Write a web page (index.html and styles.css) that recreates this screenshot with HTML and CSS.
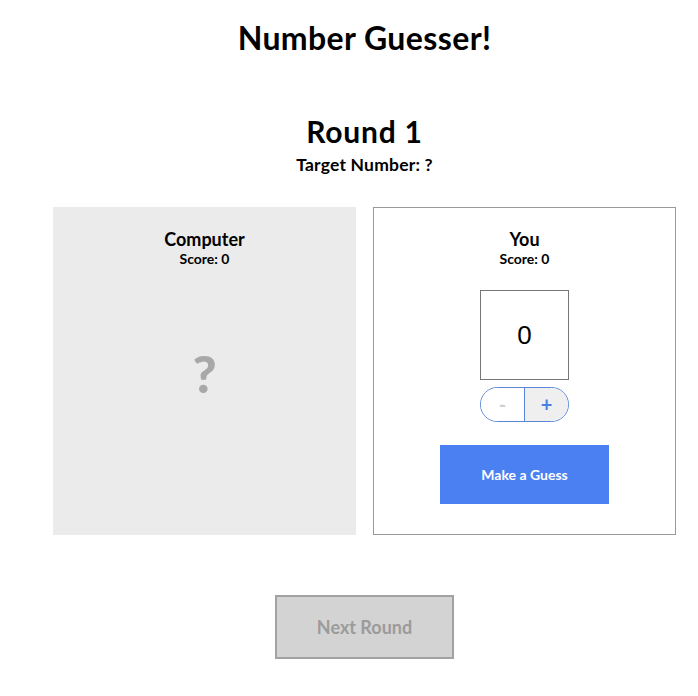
FILE: index.html
```html
<!DOCTYPE html>
<html>
<head>
<meta charset="utf-8">
<link rel="stylesheet" href="styles.css">
</head>
<body>
<div class="page">
  <h1 class="title">Number Guesser!</h1>
  <div class="round">
    <h2 class="round-title">Round 1</h2>
    <div class="target">Target Number: ?</div>
  </div>
  <div class="cards">
    <div class="card card-computer">
      <div class="card-name">Computer</div>
      <div class="card-score">Score: 0</div>
      <div class="mystery">?</div>
    </div>
    <div class="card card-you">
      <div class="card-name">You</div>
      <div class="card-score">Score: 0</div>
      <div class="guess-box">0</div>
      <div class="stepper">
        <button class="step step-minus">-</button>
        <button class="step step-plus">+</button>
      </div>
      <button class="guess-btn">Make a Guess</button>
    </div>
  </div>
  <div class="next-wrap">
    <button class="next-btn">Next Round</button>
  </div>
</div>
</body>
</html>
```
FILE: styles.css
```css
* { box-sizing: border-box; }
body {
  margin: 0;
  font-family: Lato, "Noto Sans", sans-serif;
  color: #000;
  background: #fff;
}
.page {
  width: 623px;
  margin-left: 53px;
  display: flex;
  flex-direction: column;
  align-items: center;
}
.title {
  margin: 19px 0 0;
  font-size: 32px;
  line-height: 38px;
  font-weight: 700;
  letter-spacing: 0.4px;
}
.round {
  margin-top: 56px;
  display: flex;
  flex-direction: column;
  align-items: center;
}
.round-title {
  margin: 0;
  font-size: 30px;
  line-height: 36px;
  font-weight: 700;
  letter-spacing: 0.8px;
}
.target {
  margin-top: 5px;
  font-size: 17.5px;
  line-height: 21px;
  font-weight: 700;
  letter-spacing: 0.2px;
}
.cards {
  margin-top: 32px;
  width: 100%;
  display: grid;
  grid-template-columns: 303px 303px;
  gap: 17px;
}
.card {
  height: 328px;
  display: flex;
  flex-direction: column;
  align-items: center;
  padding-top: 21px;
}
.card-computer { background: #ebebeb; }
.card-you { border: 1px solid #999; padding-top: 20px; }
.card-name {
  font-size: 18px;
  line-height: 22px;
  font-weight: 700;
}
.card-score {
  font-size: 14px;
  line-height: 16px;
  font-weight: 700;
  margin-top: 1px;
}
.mystery {
  margin-top: 76px;
  font-size: 52px;
  line-height: 60px;
  font-weight: 900;
  color: #a8a8a8;
}
.guess-box {
  margin-top: 23px;
  width: 89px;
  height: 90px;
  border: 1px solid #767676;
  display: flex;
  align-items: center;
  justify-content: center;
  font-family: "Liberation Sans", Arial, sans-serif;
  font-size: 26px;
}
.stepper {
  margin-top: 7px;
  width: 89px;
  height: 35px;
  display: flex;
  border: 1px solid #5a86d8;
  border-radius: 18px;
  overflow: hidden;
}
.step {
  flex: 1;
  border: 0;
  margin: 0;
  padding: 0;
  font-family: Lato, "Noto Sans", sans-serif;
  font-size: 20px;
  font-weight: 700;
  line-height: 33px;
}
.step-minus { background: #fff; color: #d0d0d0; border-right: 1px solid #5a86d8; }
.step-plus { background: #efefef; color: #4a7fe6; }
.guess-btn {
  margin-top: 23px;
  width: 169px;
  height: 59px;
  border: 0;
  background: #4b80f3;
  color: #fff;
  font-family: Lato, "Noto Sans", sans-serif;
  font-size: 14px;
  font-weight: 700;
}
.next-wrap {
  margin-top: 60px;
  width: 100%;
  display: flex;
  justify-content: center;
}
.next-btn {
  width: 179px;
  height: 64px;
  background: #d3d3d3;
  border: 2px solid #a2a2a2;
  color: #9b9b9b;
  font-family: Lato, "Noto Sans", sans-serif;
  font-size: 18px;
  font-weight: 700;
}
```
